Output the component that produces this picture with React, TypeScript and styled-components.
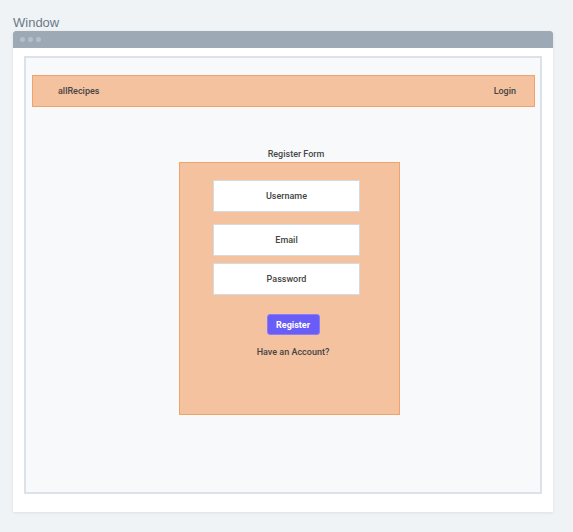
import React from 'react'
import styled, { createGlobalStyle } from 'styled-components'

const GlobalStyle = createGlobalStyle`
  html, body {
    margin: 0;
    padding: 0;
    background: #eff3f6;
    font-family: "Liberation Sans", Arial, sans-serif;
  }
`

const Page = styled.div`
  width: 573px;
  height: 532px;
  padding: 15px 0 0 13px;
  box-sizing: border-box;
`

const WindowTitle = styled.div`
  font-size: 13px;
  line-height: 16px;
  color: #6c7986;
`

const Frame = styled.div`
  width: 540px;
  background: #ffffff;
  box-shadow: 0 1px 3px rgba(0, 0, 0, 0.08);
`

const TitleBar = styled.div`
  height: 17px;
  background: #9daab6;
  border-radius: 3px 3px 0 0;
  display: flex;
  align-items: center;
  gap: 3px;
  padding-left: 7px;
`

const Dot = styled.span`
  width: 5px;
  height: 5px;
  border-radius: 50%;
  background: #b6c0ca;
`

const FrameBody = styled.div`
  padding: 8px 11px 18px 11px;
`

const Canvas = styled.div`
  height: 438px;
  box-sizing: border-box;
  background: #f8f9fb;
  border: 2px solid #dce2e9;
  padding: 17px 5px 0 6px;
`

const NavBar = styled.div`
  height: 32px;
  box-sizing: border-box;
  background: #f4c29e;
  border: 1px solid #f0a46c;
  display: flex;
  align-items: center;
  justify-content: space-between;
  padding: 0 18px 0 25px;
  font-family: Roboto, "Liberation Sans", sans-serif;
  font-size: 9px;
  font-weight: 500;
  color: #444;
`

const FormArea = styled.div`
  margin: 42px 0 0 147px;
  width: 221px;
  display: flex;
  flex-direction: column;
  font-family: Roboto, "Liberation Sans", sans-serif;
  font-weight: 500;
`

const FormLabel = styled.div`
  font-size: 9px;
  line-height: 11px;
  color: #484848;
  text-align: center;
  padding-left: 13px;
  margin-bottom: 2px;
`

const FormBox = styled.div`
  height: 253px;
  box-sizing: border-box;
  background: #f4c29e;
  border: 1px solid #f0a46c;
  padding: 17px 0 0 33px;
  display: flex;
  flex-direction: column;
`

const Field = styled.div<{ $gap: number }>`
  width: 147px;
  height: 32px;
  box-sizing: border-box;
  background: #ffffff;
  border: 1px solid #d5dae0;
  display: flex;
  align-items: center;
  justify-content: center;
  font-size: 9px;
  color: #444;
  margin-bottom: ${({ $gap }) => $gap}px;
`

const Actions = styled.div`
  width: 160px;
  display: flex;
  flex-direction: column;
  align-items: center;
  gap: 12px;
`

const RegisterButton = styled.button`
  width: 53px;
  height: 21px;
  border: 1px solid #8a7ef8;
  border-radius: 3px;
  background: #6a5cf6;
  color: #ffffff;
  font-family: Roboto, "Liberation Sans", sans-serif;
  font-size: 9px;
  font-weight: 700;
  padding: 0;
`

const AccountText = styled.div`
  font-size: 9px;
  color: #444;
`

const App = () => {
  return (
    <>
      <GlobalStyle />
      <Page>
        <WindowTitle>Window</WindowTitle>
        <Frame>
          <TitleBar>
            <Dot />
            <Dot />
            <Dot />
          </TitleBar>
          <FrameBody>
            <Canvas>
              <NavBar>
                <span>allRecipes</span>
                <span>Login</span>
              </NavBar>
              <FormArea>
                <FormLabel>Register Form</FormLabel>
                <FormBox>
                  <Field $gap={12}>Username</Field>
                  <Field $gap={7}>Email</Field>
                  <Field $gap={19}>Password</Field>
                  <Actions>
                    <RegisterButton>Register</RegisterButton>
                    <AccountText>Have an Account?</AccountText>
                  </Actions>
                </FormBox>
              </FormArea>
            </Canvas>
          </FrameBody>
        </Frame>
      </Page>
    </>
  )
}

export default App
